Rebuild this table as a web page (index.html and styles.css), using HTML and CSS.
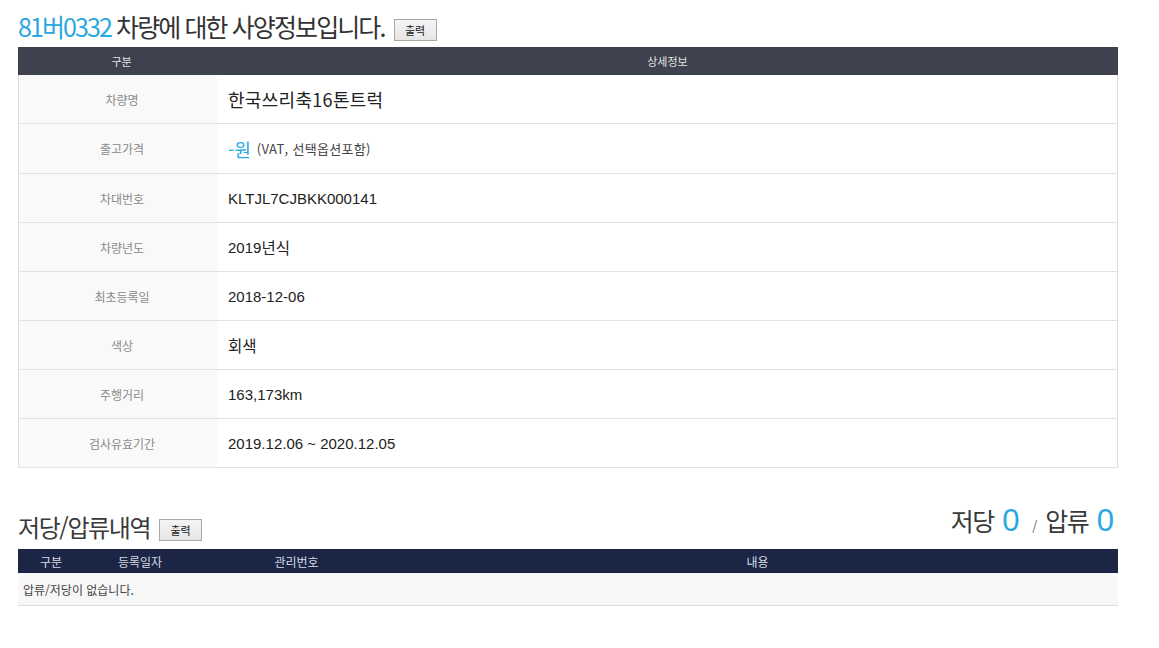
FILE: index.html
```html
<!DOCTYPE html>
<html lang="ko">
<head>
<meta charset="utf-8">
<link rel="stylesheet" href="styles.css">
</head>
<body>
<div class="page">
  <div class="head">
    <h1 class="title"><span class="blue">81버0332</span> 차량에 대한 사양정보입니다.</h1>
    <button class="btn">출력</button>
  </div>
  <div class="spec">
    <div class="spec-head">
      <div class="c-label">구분</div>
      <div class="c-value">상세정보</div>
    </div>
    <div class="row"><div class="label">차량명</div><div class="value name">한국쓰리축16톤트럭</div></div>
    <div class="row tall"><div class="label">출고가격</div><div class="value"><span class="price">-원</span><span class="note">(VAT, 선택옵션포함)</span></div></div>
    <div class="row"><div class="label">차대번호</div><div class="value">KLTJL7CJBKK000141</div></div>
    <div class="row"><div class="label">차량년도</div><div class="value">2019<span class="ko">년식</span></div></div>
    <div class="row"><div class="label">최초등록일</div><div class="value">2018-12-06</div></div>
    <div class="row"><div class="label">색상</div><div class="value"><span class="ko">회색</span></div></div>
    <div class="row"><div class="label">주행거리</div><div class="value">163,173km</div></div>
    <div class="row"><div class="label">검사유효기간</div><div class="value">2019.12.06 ~ 2020.12.05</div></div>
  </div>

  <div class="head2">
    <div class="left">
      <h2 class="title2">저당/압류내역</h2>
      <button class="btn">출력</button>
    </div>
    <div class="counts">저당 <span class="num">0</span> <span class="slash">/</span> 압류 <span class="num">0</span></div>
  </div>
  <div class="lien">
    <div class="lien-head">
      <div>구분</div><div>등록일자</div><div>관리번호</div><div>내용</div>
    </div>
    <div class="lien-row">압류/저당이 없습니다.</div>
  </div>
</div>
</body>
</html>
```
FILE: styles.css
```css
html, body { margin: 0; padding: 0; background: #fff; }
body { font-family: "Noto Sans CJK KR", "Noto Sans", sans-serif; color: #333; }
.page { width: 1100px; padding: 0 0 0 18px; }

.head { display: flex; align-items: flex-end; height: 47px; }
.title { margin: 0 0 6px 0; font-size: 25px; font-weight: 400; letter-spacing: -1.9px; line-height: 30px; color: #333; }
.blue { color: #2aa8e0; }
.btn {
  font-family: "Noto Sans CJK KR", sans-serif; font-size: 11px; color: #222;
  height: 22px; width: 43px; padding: 0; margin: 0 0 6px 9px;
  background: linear-gradient(#f4f4f4, #e6e6e6); border: 1px solid #a9a9a9; border-radius: 0;
  line-height: 18px;
}

.spec { border-left: 1px solid #ddd; border-right: 1px solid #ddd; width: 1098px; }
.spec-head { display: grid; grid-template-columns: 199px 1fr; height: 28px; background: #3d424e; margin: 0 -1px; color: #e4e4e4; font-size: 11px; }
.spec-head > div { display: flex; align-items: center; justify-content: center; }
.c-label { padding-left: 8px; }
.row { display: grid; grid-template-columns: 198px 1fr; height: 48px; border-bottom: 1px solid #e2e2e2; }
.row.tall { height: 49px; }
.label { background: #f9f9f9; display: flex; align-items: center; justify-content: center; font-size: 12px; color: #8a8a8a; padding-left: 8px; }
.value { display: flex; align-items: center; padding-left: 11px; font-family: "Liberation Sans", "Noto Sans CJK KR", sans-serif; font-size: 15px; color: #222; }
.value.name { font-family: "Noto Sans CJK KR", sans-serif; font-size: 18px; letter-spacing: 0.3px; }
.ko { font-family: "Noto Sans CJK KR", sans-serif; font-size: 15.5px; }
.price { color: #2aa8e0; font-family: "Noto Sans CJK KR", sans-serif; font-size: 18px; margin-right: 6px; }
.note { font-family: "Noto Sans CJK KR", sans-serif; font-size: 13px; color: #444; letter-spacing: 0.3px; }

.head2 { display: flex; justify-content: space-between; align-items: flex-end; width: 1100px; height: 81px; }
.left { display: flex; align-items: flex-end; }
.title2 { margin: 0 0 7px 0; font-size: 24px; font-weight: 400; letter-spacing: -1.4px; line-height: 30px; color: #3a3a3a; }
.head2 .btn { margin-bottom: 8px; }
.counts { font-size: 25px; letter-spacing: -1.5px; color: #3a3a3a; margin: 0 1px 8px 0; line-height: 30px; }
.num { color: #2aa8e0; font-size: 31px; font-family: "Liberation Sans", sans-serif; letter-spacing: 0; margin: 0 3px; }
.slash { font-size: 13px; color: #666; margin: 0 4px; }

.lien { width: 1100px; }
.lien-head { display: grid; grid-template-columns: 66px 112px 201px 1fr; height: 24px; background: #1b2646; color: #d8dbe4; font-size: 12px; }
.lien-head > div { display: flex; align-items: center; justify-content: center; }
.lien-row { height: 32px; background: #f7f7f7; border-bottom: 1px solid #dcdcdc; display: flex; align-items: center; padding-left: 5px; font-size: 12px; color: #444; }
```
